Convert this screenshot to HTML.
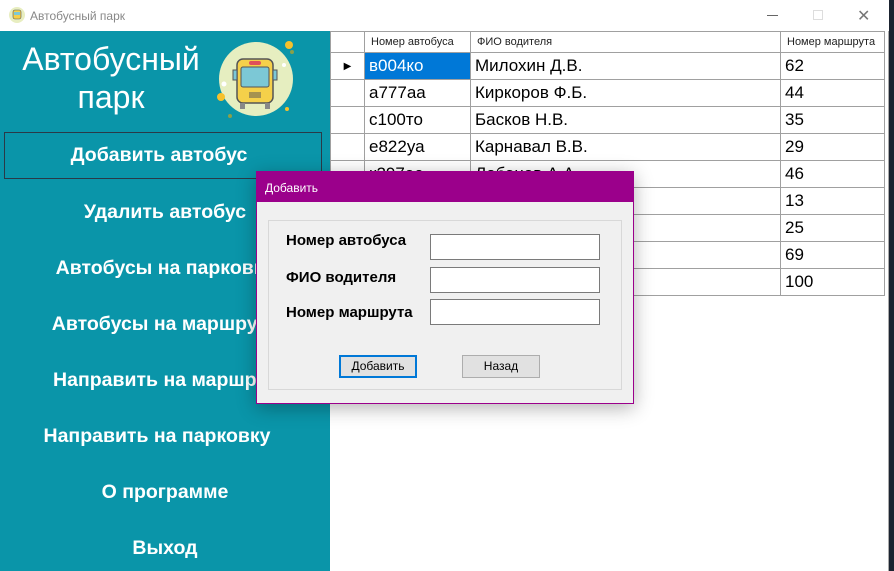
<!DOCTYPE html>
<html><head><meta charset="utf-8"><style>
*{margin:0;padding:0;box-sizing:border-box}
body{width:894px;height:571px;overflow:hidden;background:#1b2330;font-family:"Liberation Sans",sans-serif;position:relative}
.win{position:absolute;left:0;top:0;width:889px;height:571px;background:#fff;border-right:1px solid #aaa}
.tb{position:absolute;left:0;top:0;width:889px;height:31px;background:#fff}
.tb .t{position:absolute;left:30px;top:9px;font-size:12px;color:#888}
.side{position:absolute;left:0;top:31px;width:330px;height:540px;background:#0a95a9;overflow:hidden}
.logo{position:absolute;left:10px;top:9px;width:202px;text-align:center;color:#fff;font-size:32px;line-height:38px}
.btn{position:absolute;left:0;width:330px;text-align:center;color:#fff;font-weight:bold;font-size:19.5px;white-space:nowrap}
.sel{position:absolute;left:4px;top:101px;width:318px;height:47px;border:1px solid #2a3a48}
table{position:absolute;left:330px;top:31px;border-collapse:collapse;font-size:17px}
td{border:1px solid #a0a0a0;height:27px;padding:0 4px;white-space:nowrap}
th{border:1px solid #a0a0a0;height:21px;font-weight:normal;font-size:11px;text-align:left;padding:0 6px;color:#222}
.dlg{position:absolute;left:256px;top:171px;width:378px;height:233px;background:#f0f0f0;border:1px solid #9b008b;box-shadow:0 4px 18px rgba(0,0,0,.3)}
.dt{height:30px;background:#9b008b;color:#fff;font-size:12px;padding:9px 0 0 8px}
.gb{position:absolute;left:11px;top:48px;width:354px;height:170px;border:1px solid #d8d8d8}
.lb{position:absolute;left:29px;font-weight:bold;font-size:15px;color:#000}
.in{position:absolute;left:173px;width:170px;height:26px;background:#fff;border:1px solid #7a7a7a}
.b{position:absolute;top:183px;width:78px;height:23px;background:#e1e1e1;border:1px solid #adadad;font-size:12px;text-align:center;line-height:21px}
</style></head><body>
<div class="win">
<div class="tb">
<svg style="position:absolute;left:9px;top:7px" width="16" height="16"><circle cx="8" cy="8" r="8" fill="#e8eec0"/><rect x="4" y="3" width="8" height="9" rx="2" fill="#f5d04a" stroke="#555" stroke-width=".6"/><rect x="5" y="5" width="6" height="3" fill="#7cc8d6"/></svg>
<div class="t">Автобусный парк</div>
<div style="position:absolute;left:767px;top:15px;width:11px;height:1px;background:#666"></div>
<div style="position:absolute;left:813px;top:10px;width:10px;height:10px;border:1px solid #ddd"></div>
<div style="position:absolute;left:857px;top:6px;font-size:16px;color:#777">✕</div>
</div>
<div class="side">
<div class="logo">Автобусный<br>парк</div>
<svg style="position:absolute;left:212px;top:6px" width="90" height="86">
<circle cx="44" cy="42" r="37" fill="#e6eec0"/>
<circle cx="77" cy="8" r="4" fill="#f6c12c"/><circle cx="80" cy="15" r="2" fill="#8aa04a"/><circle cx="72" cy="28" r="2" fill="#fff"/>
<circle cx="9" cy="60" r="4" fill="#f6c12c"/><circle cx="12" cy="47" r="2.5" fill="#fff"/><circle cx="18" cy="79" r="2" fill="#8aa04a"/><circle cx="75" cy="72" r="2" fill="#f6c12c"/>
<rect x="25" y="22" width="36" height="44" rx="6" fill="#f5d04a" stroke="#555" stroke-width="1.5"/>
<rect x="29" y="30" width="28" height="20" rx="2" fill="#7cc8d6" stroke="#555"/>
<rect x="37" y="24" width="12" height="4" rx="2" fill="#e0505a"/>
<rect x="21" y="33" width="4" height="10" fill="#7cc8d6" stroke="#555"/><rect x="61" y="33" width="4" height="10" fill="#7cc8d6" stroke="#555"/>
<rect x="28" y="66" width="5" height="6" fill="#888"/><rect x="53" y="66" width="5" height="6" fill="#888"/>
<path d="M38 55v6M40 55v6M42 55v6M44 55v6M46 55v6M48 55v6" stroke="#555"/>
</svg>
<div class="sel"></div>
<div class="btn" style="top:113px;left:-6px">Добавить автобус</div>
<div class="btn" style="top:170px">Удалить автобус</div>
<div class="btn" style="top:226px">Автобусы на парковке</div>
<div class="btn" style="top:282px">Автобусы на маршруте</div>
<div class="btn" style="top:338px">Направить на маршрут</div>
<div class="btn" style="top:394px;left:-8px">Направить на парковку</div>
<div class="btn" style="top:450px">О программе</div>
<div class="btn" style="top:506px">Выход</div>
</div>
<table>
<tr><th style="width:34px"></th><th style="width:106px">Номер автобуса</th><th style="width:310px">ФИО водителя</th><th style="width:104px">Номер маршрута</th></tr>
<tr><td style="font-size:10px;text-align:center">▶</td><td style="background:#0078d7;color:#fff">в004ко</td><td>Милохин Д.В.</td><td>62</td></tr>
<tr><td></td><td>а777аа</td><td>Киркоров Ф.Б.</td><td>44</td></tr>
<tr><td></td><td>с100то</td><td>Басков Н.В.</td><td>35</td></tr>
<tr><td></td><td>е822уа</td><td>Карнавал В.В.</td><td>29</td></tr>
<tr><td></td><td>к297ее</td><td>Лобанов А.А.</td><td>46</td></tr>
<tr><td></td><td></td><td></td><td>13</td></tr>
<tr><td></td><td></td><td></td><td>25</td></tr>
<tr><td></td><td></td><td></td><td>69</td></tr>
<tr><td></td><td></td><td></td><td>100</td></tr>
</table>
</div>
<div class="dlg">
<div class="dt">Добавить</div>
<div class="gb"></div>
<div class="lb" style="top:60px">Номер автобуса</div>
<div class="lb" style="top:97px">ФИО водителя</div>
<div class="lb" style="top:132px">Номер маршрута</div>
<div class="in" style="top:62px"></div>
<div class="in" style="top:95px"></div>
<div class="in" style="top:127px"></div>
<div class="b" style="left:82px;border:2px solid #0078d7;line-height:19px">Добавить</div>
<div class="b" style="left:205px">Назад</div>
</div>
</body></html>
